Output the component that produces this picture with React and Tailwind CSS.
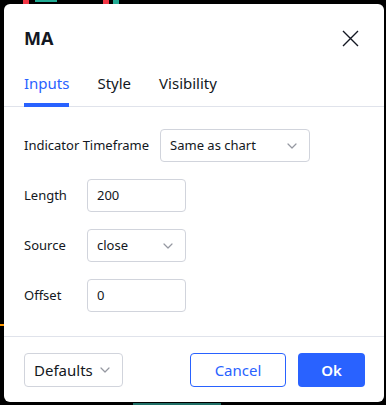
import { useState } from "react";

const Chevron = () => (
  <svg width="10" height="6" viewBox="0 0 10 6" fill="none" className="shrink-0">
    <path d="M1 1l4 4 4-4" stroke="#9598a1" strokeWidth="1.2" strokeLinecap="round" strokeLinejoin="round" />
  </svg>
);

function Field({ label, children, labelClass = "w-[54px]" }) {
  return (
    <div className="flex items-center gap-[9px] h-[33px]">
      <span className={`${labelClass} text-[13px] text-[#131722]`}>{label}</span>
      {children}
    </div>
  );
}

function SelectBox({ value, className = "text-[13px]" }) {
  return (
    <div
      className={`h-[33px] border border-[#d1d4dc] rounded-[4px] flex items-center justify-between pl-[9px] pr-[12px] text-[#131722] ${className}`}
    >
      <span>{value}</span>
      <Chevron />
    </div>
  );
}

function TextInput({ value }) {
  return (
    <div className="h-[33px] w-[99px] border border-[#d1d4dc] rounded-[4px] flex items-center px-[9px] text-[13px] text-[#131722]">
      {value}
    </div>
  );
}

export default function App() {
  const [tab, setTab] = useState("Inputs");
  const tabs = ["Inputs", "Style", "Visibility"];

  return (
    <div
      className="relative w-[386px] h-[405px] bg-black pt-[4px] pl-[4px] overflow-hidden"
      style={{ fontFamily: '"Noto Sans", "Open Sans", sans-serif' }}
    >
      {/* chart bits behind the dialog */}
      <span className="absolute top-0 left-[23px] w-[6px] h-[4px] bg-[#f23645]" />
      <span className="absolute top-0 left-[35px] w-[22px] h-[2px] bg-[#22ab94]" />
      <span className="absolute top-0 left-[103px] w-[6px] h-[4px] bg-[#f23645]" />
      <span className="absolute top-0 left-[113px] w-[6px] h-[4px] bg-[#22ab94]" />
      <span className="absolute top-[324px] left-0 w-[4px] h-[2px] bg-[#ff9800]" />
      <span className="absolute bottom-0 left-[133px] w-[88px] h-[2px] bg-[#1f6f66]" />

      <div className="relative w-[380px] h-[398px] bg-white rounded-[6px] flex flex-col">
        {/* header */}
        <div className="h-[68px] flex items-center justify-between pl-[20px] pr-[25px]">
          <span className="text-[18px] font-bold text-[#131722]">MA</span>
          <svg width="17" height="17" viewBox="0 0 17 17" fill="none">
            <path d="M1 1l15 15M16 1L1 16" stroke="#131722" strokeWidth="1.4" />
          </svg>
        </div>

        {/* tabs */}
        <div className="flex gap-[28px] pl-[20px] border-b border-[#e0e3eb] h-[35px]">
          {tabs.map((t) => (
            <button
              key={t}
              type="button"
              onClick={() => setTab(t)}
              className={`relative text-[15px] leading-none pt-[2px] pb-[14px] ${
                tab === t ? "text-[#2962ff]" : "text-[#131722]"
              }`}
            >
              {t}
              {tab === t && (
                <span className="absolute left-0 right-0 bottom-[-1px] h-[4px] bg-[#2962ff]" />
              )}
            </button>
          ))}
        </div>

        {/* inputs */}
        <div className="flex-1 flex flex-col gap-[17px] pl-[20px] pt-[22px]">
          <Field label="Indicator Timeframe" labelClass="pr-[2px]">
            <SelectBox value="Same as chart" className="w-[150px] text-[13px]" />
          </Field>
          <Field label="Length">
            <TextInput value="200" />
          </Field>
          <Field label="Source">
            <SelectBox value="close" className="w-[99px] text-[13px]" />
          </Field>
          <Field label="Offset">
            <TextInput value="0" />
          </Field>
        </div>

        {/* footer */}
        <div className="h-[66px] border-t border-[#e0e3eb] flex items-start pt-[16px] pl-[20px] pr-[19px]">
          <SelectBox value="Defaults" className="w-[99px] h-[34px] text-[15px]" />
          <div className="ml-auto flex gap-[12px]">
            <button
              type="button"
              className="h-[34px] w-[96px] border border-[#2962ff] rounded-[4px] text-[15px] text-[#2962ff]"
            >
              Cancel
            </button>
            <button
              type="button"
              className="h-[34px] w-[67px] bg-[#2962ff] rounded-[4px] text-[15px] font-semibold text-white"
            >
              Ok
            </button>
          </div>
        </div>
      </div>
    </div>
  );
}
